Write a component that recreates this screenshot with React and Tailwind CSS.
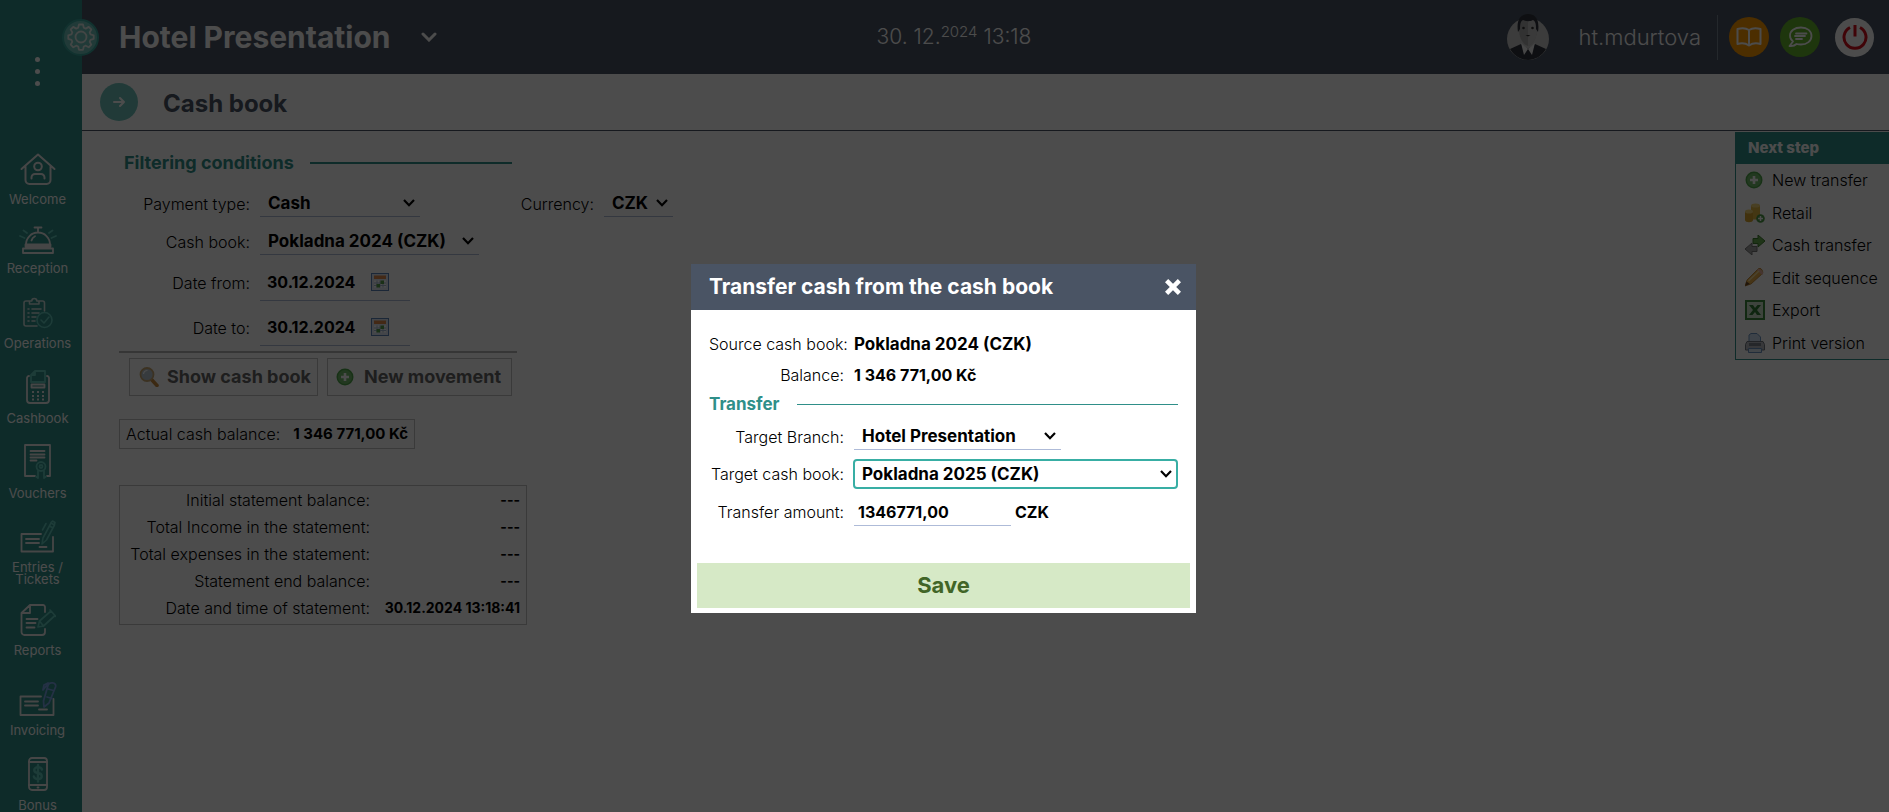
import React from "react";

const S = { fill: "none", stroke: "#ececec", strokeWidth: 2, strokeLinecap: "round", strokeLinejoin: "round" };
const G = "#62c8bc";

const WelcomeIcon = () => (
  <svg width="36" height="32" viewBox="0 0 36 32" {...S}>
    <path d="M1.5 16 18 1.5 34.500 16M5.500 13.500V27a4 4 0 0 0 4 4h17a4 4 0 0 0 4-4V13.500" />
    <circle cx="18" cy="13.500" r="3.800" />
    <path d="M11.500 25.500v-1a3.500 3.500 0 0 1 3.500-3.500h6a3.500 3.500 0 0 1 3.500 3.500v1" />
  </svg>
);
const ReceptionIcon = () => (
  <svg width="38" height="28" viewBox="0 0 38 28" {...S} strokeWidth="1.800">
    <path d="M15.500 1.500h7M19 1.500V6M7 18.500a12 12 0 0 1 24 0M12.500 14.500c.5-2 1.800-3.500 3.500-4.300" />
    <path d="M6.500 18.500h25v2h-25zM4 22.500h30V27H4z" />
    <path d="m1 10 4.500 2M4.500 4.500 8 7M37 10l-4.500 2M33.500 4.500 30 7" stroke={G} />
  </svg>
);
const OperationsIcon = () => (
  <svg width="30" height="33" viewBox="0 0 30 33" {...S} stroke="#cfe0de" strokeWidth="1.600">
    <path d="M7 5H3a2 2 0 0 0-2 2v21a2 2 0 0 0 2 2h11M15.500 5h4a2 2 0 0 1 2 2v8M6.500 8V5h2.300a2.500 2.500 0 0 1 5 0H16v3z" />
    <path d="M5 13h1M9 13h9M5 17h1M9 17h7M5 21h1M9 21h4M5 25h1M9 25h3" />
    <circle cx="21.500" cy="24" r="7.500" stroke={G} />
    <path d="m18 24 3 3 5-6" stroke={G} />
  </svg>
);
const CashbookIcon = () => (
  <svg width="24" height="34" viewBox="0 0 24 34" {...S} strokeWidth="1.800">
    <path d="M3 6a2 2 0 0 0-2 2v22a3 3 0 0 0 3 3h16a3 3 0 0 0 3-3V8a2 2 0 0 0-2-2" />
    <path d="M9 1h10v11H5V5zM9 1v4H5" stroke={G} />
    <path d="M5.500 14.500h13v3h-13z" />
    <path d="M6 22h2M11 22h2M16 22h2M6 26h2M11 26h2M16 26h2M6 29.500h2M11 29.500h2M16 29.500h2" strokeLinecap="butt" strokeWidth="2.200" />
  </svg>
);
const VouchersIcon = () => (
  <svg width="27" height="35" viewBox="0 0 27 35" {...S} strokeWidth="1.800">
    <path d="M11 32H1V1h25v31h-3M6.500 7h14M6.500 10.500h14M6.500 13.500h14M6.500 16.500h6" />
    <circle cx="17" cy="22.500" r="4.500" stroke={G} />
    <circle cx="17" cy="22.500" r="1.500" stroke={G} />
    <path d="M14 27v7l-2-1.500M20 27v7l2-1.500" stroke={G} />
  </svg>
);
const EntriesIcon = () => (
  <svg width="36" height="33" viewBox="0 0 36 33" {...S} strokeWidth="1.800">
    <path d="M21 14H1.500v17.500H33V17M6 19h13M6 23h13M19.500 27h7" />
    <path d="m22 24 1-6L31 3l3.500 2-8 15zM29.500 6l3.500 2M31 2.500l1.500-1.500 2.500 1.500-.5 2M26 3.500 22.500 10" stroke={G} strokeWidth="1.600" />
  </svg>
);
const ReportsIcon = () => (
  <svg width="36" height="32" viewBox="0 0 36 32" {...S} strokeWidth="1.800">
    <path d="M25 8V3a2 2 0 0 0-2-2H10L1.500 9v19a3 3 0 0 0 3 3H22a3 3 0 0 0 3-3v-3M10 1v8H1.500M6.500 15h11M6.500 19h9M6.500 23.500h8" />
    <path d="m18 23 1.500-6L31 7l4 4.500L23.500 22zM19.500 17l4 5M31 7l-1-1M35 11.500l1 1" stroke={G} strokeWidth="1.700" />
  </svg>
);
const InvoicingIcon = () => (
  <svg width="38" height="35" viewBox="0 0 38 35" {...S} strokeWidth="1.800">
    <path d="M22 15.500H1.500V34H34.500V18M6 20.500h13M6 24.500h13M20 28.500h8" />
    <path d="m25 26-.5-6L29 4.500c1-4 9-3.500 7.500 1.500L30 22zM29 8l5.500 1.500M28 16l5 1.500M28 4l-4 5 1-5 4-2" stroke="#7aa3e6" strokeWidth="1.800" />
  </svg>
);
const BonusIcon = () => (
  <svg width="20" height="34" viewBox="0 0 20 34" {...S} strokeWidth="1.800">
    <rect x="1" y="1" width="18" height="32" rx="3" />
    <path d="M1 5h18M1 28h18M9.500 30.500h1" />
    <path d="M14 12.500c-.5-1.500-2-2.200-4-2.200-5 0-5 5.200 0 5.700s5 6 0 6c-2.300 0-3.800-.8-4.200-2.500M10 8v16.500" stroke={G} strokeWidth="2.400" />
  </svg>
);

const NAV = [
  { label: "Welcome", Icon: WelcomeIcon, size: "h-[62px]" },
  { label: "Reception", Icon: ReceptionIcon, size: "h-[69px]" },
  { label: "Operations", Icon: OperationsIcon, size: "h-[75px]" },
  { label: "Cashbook", Icon: CashbookIcon, size: "h-[75px]" },
  { label: "Vouchers", Icon: VouchersIcon, size: "h-[75px]" },
  { label: "Entries / Tickets", Icon: EntriesIcon, size: "h-[86px]" },
  { label: "Reports", Icon: ReportsIcon, size: "h-[71px]" },
  { label: "Invoicing", Icon: InvoicingIcon, size: "h-[80px]" },
  { label: "Bonus", Icon: BonusIcon, size: "h-[75px]" },
];

const GearIcon = () => (
  <svg width="28" height="28" viewBox="0 0 28 28" fill="none" stroke="#dfe9e8" strokeWidth="1.800" strokeLinejoin="round" className="shrink-0">
    <circle cx="14" cy="14" r="5.500" />
    <path d="M12 1.500h4l.8 3.200 2 .9 2.900-1.700 2.600 2.600-1.600 2.900.8 2 3.200.9v3.600l-3.200.9-.8 2 1.600 2.900-2.600 2.600-2.900-1.600-2 .8-.8 3.400h-4l-.8-3.400-2-.8-2.900 1.600-2.600-2.600 1.600-2.900-.8-2-3.200-.9v-3.600l3.200-.9.800-2-1.600-2.900 2.600-2.600 2.900 1.700 2-.9z" />
  </svg>
);

const Avatar = () => (
  <svg width="42" height="46" viewBox="0 0 42 46" aria-label="User photo">
    <circle cx="21" cy="25" r="21" fill="#c8c8c8" />
    <path d="M3 35 14 30l7 5 7-5 11 5c-4 7-11 11-18 11S7 42 3 35z" fill="#30343c" />
    <path d="m14 29 7 6-4 6zM28 29l-7 6 4 6z" fill="#eee" />
    <path d="M12 14C12 6 15 3 21 3s9 3 9 11c0 9-3 16-9 18-6-2-9-9-9-18z" fill="#a8a8a8" />
    <path d="M21 3c6 0 9 3 9 11 0 9-3 16-9 18z" fill="#c4c4c4" />
    <path d="M11 18C9 5 14 0 21 0s12 5 10 18l-2-3c0-6-1-8-3-9-3 2-8 1-10 0-2 1-3 3-3 9z" fill="#30343c" />
    <circle cx="16.500" cy="14" r="1.300" fill="#333" />
    <circle cx="25.500" cy="14" r="1.300" fill="#333" />
    <path d="M18.500 21h5L21 22.500z" fill="#333" />
  </svg>
);

const Chevron = ({ className = "" }) => (
  <svg width="12" height="8" viewBox="0 0 12 8" fill="none" stroke="currentColor" strokeWidth="2.200" className={className} aria-hidden="true">
    <path d="m1 1 5 5.200L11 1" />
  </svg>
);

const CalendarIcon = () => (
  <svg width="18" height="18" viewBox="0 0 18 18">
    <rect x=".5" y=".5" width="17" height="17" fill="#dfe8f5" stroke="#5b82b8" />
    <rect x="3" y="2.500" width="12" height="3.500" fill="#e08a4a" />
    <path d="M3 7.500h12v7H3z" fill="#fff" />
    <path d="M3 10h12M3 12.500h12M6 7.500v7M9 7.500v7M12 7.500v7" stroke="#a9bcd6" />
    <path d="M9.500 7.500h3.500v3.500H9.500zM5.500 11H9v3.500H5.500z" fill="#58a24f" />
  </svg>
);
const PlusIcon = () => (
  <svg width="18" height="18" viewBox="0 0 18 18">
    <circle cx="9" cy="9" r="8.500" fill="#4fa64a" />
    <circle cx="9" cy="9" r="7" fill="#74bd6b" />
    <path d="M9 5v8M5 9h8" stroke="#fff" strokeWidth="2.600" />
  </svg>
);
const SearchIcon = () => (
  <svg width="20" height="20" viewBox="0 0 20 20">
    <path d="m12.500 12.500 5.500 6" stroke="#c98a3c" strokeWidth="3.500" strokeLinecap="round" />
    <circle cx="8" cy="7.500" r="6.500" fill="#b9c6d0" stroke="#c9a873" strokeWidth="1.800" />
    <path d="M4.500 7a4 4 0 0 1 4-3.500" stroke="#fff" fill="none" strokeWidth="1.200" />
  </svg>
);
const CoinsIcon = () => (
  <svg width="20" height="20" viewBox="0 0 20 20">
    <path d="M6 2.500v14h9v-14z" fill="#e5b742" />
    <ellipse cx="10.500" cy="2.500" rx="4.500" ry="2" fill="#f5d67a" />
    <path d="M0 8.500V17c0 3 8 3 8 0V8.500z" fill="#d9a52d" />
    <ellipse cx="4" cy="8.500" rx="4" ry="2" fill="#f5d67a" />
    <circle cx="15.500" cy="15.500" r="4.300" fill="#4f9c49" />
    <path d="M15.500 13v5M13 15.500h5" stroke="#fff" strokeWidth="1.500" />
  </svg>
);
const SwapIcon = () => (
  <svg width="20" height="20" viewBox="0 0 20 20">
    <path d="M8 3.500h5V0l7 6-7 6V8.500H8z" fill="#6aae52" stroke="#3f7c30" />
    <path d="M12 11.500H7V8l-7 6 7 6v-3.500h5z" fill="#a3a3a3" stroke="#777" />
  </svg>
);
const PencilIcon = () => (
  <svg width="19" height="19" viewBox="0 0 19 19">
    <path d="m0 18 2-6L13 1c1-1 3-1 4 1s1 3 0 4L6 16z" fill="#e9b04b" stroke="#b97e2c" strokeWidth=".8" />
    <path d="m12 2 5 5 1-1c1-2-3-6-5-5z" fill="#e6b1a0" />
    <path d="M3.500 13 14 3" stroke="#f8df9c" strokeWidth="1.500" />
    <path d="m0 18 1.500-4.500L5 16z" fill="#6d4a2a" />
  </svg>
);
const ExcelIcon = () => (
  <svg width="20" height="20" viewBox="0 0 20 20">
    <rect x="1" y="1" width="18" height="18" fill="#cfe3cc" stroke="#3e8a3e" strokeWidth="2" />
    <path d="M4 5h4l2 3 2.500-3H16l-4 5 4 5h-4l-2-3-2.500 3H4l4-5z" fill="#2f7d33" />
  </svg>
);
const PrinterIcon = () => (
  <svg width="20" height="20" viewBox="0 0 20 20">
    <path d="M4 9V2l2-1.500h6L15.500 4v5z" fill="#cfe2f5" stroke="#6d93c2" />
    <path d="M2 8.500h16l1.500 3V17H.5v-5.500z" fill="#b9bdc4" stroke="#70757f" />
    <path d="M4 10h12v3H4z" fill="#7c828c" />
    <path d="M3.500 15.500h13v4h-13z" fill="#dce9f6" stroke="#6d93c2" />
  </svg>
);

const STEPS = [
  ["New transfer", PlusIcon],
  ["Retail", CoinsIcon],
  ["Cash transfer", SwapIcon],
  ["Edit sequence", PencilIcon],
  ["Export", ExcelIcon],
  ["Print version", PrinterIcon],
];

const SUMMARY = [
  ["Initial statement balance:", "---"],
  ["Total Income in the statement:", "---"],
  ["Total expenses in the statement:", "---"],
  ["Statement end balance:", "---"],
  ["Date and time of statement:", "30.12.2024 13:18:41"],
];

function Select({ id, value, width, focused }) {
  return (
    <div className={`grid items-center text-[17px] ${width} ${focused ? "h-[30px] rounded border-2 border-[#38aea4]" : "h-[27px] border-b border-[#aebbd8]"}`}>
      <select id={id} defaultValue={value} className={`col-start-1 row-start-1 w-full appearance-none bg-transparent font-bold outline-none ${focused ? "pl-[7px]" : "pl-2"}`}>
        <option>{value}</option>
      </select>
      <Chevron className={`pointer-events-none col-start-1 row-start-1 justify-self-end ${focused ? "mr-1" : "mr-[5px]"}`} />
    </div>
  );
}

const Label = ({ htmlFor, children }) => (
  <label htmlFor={htmlFor} className="w-[131px] shrink-0 text-right font-light">{children}</label>
);

function DateField({ id, label }) {
  return (
    <div className="flex items-center gap-2.5">
      <Label htmlFor={id}>{label}</Label>
      <div className="flex h-[37px] w-[150px] items-center border-b border-[#aebbd8] pl-[7px]">
        <input id={id} defaultValue="30.12.2024" className="w-[104px] bg-transparent font-bold outline-none" />
        <button type="button" aria-label="Open calendar"><CalendarIcon /></button>
      </div>
    </div>
  );
}

function Sidebar() {
  return (
    <nav className="w-[82px] shrink-0 bg-[#2f8f89] pr-[7px] text-white">
      <button type="button" aria-label="More" className="mt-[57px] mb-[59px] flex w-full flex-col items-center gap-[7px]">
        <span className="size-[5px] rounded-full bg-white" />
        <span className="size-[5px] rounded-full bg-white" />
        <span className="size-[5px] rounded-full bg-white" />
      </button>
      {NAV.map(({ label, Icon, size }) => (
        <a key={label} href="#" className={`flex flex-col items-center justify-end gap-2 text-center text-[13px] leading-3 ${size}`}>
          <Icon />
          <span className="w-[68px] pb-0.5"><span className="-mx-1 block">{label}</span></span>
        </a>
      ))}
    </nav>
  );
}

function TopBar() {
  return (
    <header className="flex h-[74px] items-center bg-[#4a5464] text-white">
      <div className="flex flex-1 items-center">
        <button type="button" aria-label="Settings" className="relative -left-5 flex size-[37px] items-center justify-center rounded-full border-2 border-[#3aa79f] bg-[#6fc4bb]">
          <GearIcon />
        </button>
        <button type="button" className="flex items-center gap-[30px] text-[30px] font-bold whitespace-nowrap">
          Hotel Presentation
          <svg width="16" height="10" viewBox="0 0 16 10" fill="none" stroke="currentColor" strokeWidth="3" strokeLinecap="round"><path d="m2 2 6 6 6-6" /></svg>
        </button>
      </div>
      <time className="mr-12 text-[21px] font-light whitespace-nowrap">30. 12.<sup className="text-[15px]">2024</sup> 13:18</time>
      <div className="flex flex-1 items-center justify-end pr-[15px]">
        <Avatar />
        <span className="ml-[30px] text-[22px] font-light">ht.mdurtova</span>
        <span className="mr-[11px] ml-4 h-[45px] w-px bg-[#7b8594]" />
        <button type="button" aria-label="Manual" className="flex size-10 items-center justify-center rounded-full bg-[#ff9a00]">
          <svg width="26" height="20" viewBox="0 0 26 20" fill="none" stroke="#fff" strokeWidth="2" strokeLinejoin="round"><path d="M13 3C10 1 5 1 1.500 2v15c3.500-1 8-1 11.500 1.500C16.500 16 21 16 24.500 17V2C21 1 16 1 13 3zM13 3v15.500" /></svg>
        </button>
        <button type="button" aria-label="Messages" className="ml-[11px] flex size-10 items-center justify-center rounded-full bg-[#66b42c]">
          <svg width="25" height="22" viewBox="0 0 25 22" fill="none" stroke="#fff" strokeWidth="1.800" strokeLinecap="round" strokeLinejoin="round"><path d="M13 1.500C6.500 1.500 2 5 2 9.500c0 2.500 1 4.500 3 6L1.500 20c3 .3 5.500-.5 7-2 1.500.4 3 .5 4.500.5 6 0 10.500-3.500 10.500-8.500S19.500 1.500 13 1.500zM8 7.500h10.500M7 10h10M8 13h6" /></svg>
        </button>
        <button type="button" aria-label="Log out" className="ml-[15px] flex size-[39px] items-center justify-center rounded-full bg-white">
          <svg width="26" height="26" viewBox="0 0 26 26" fill="none" stroke="#d8101c" strokeWidth="3"><path d="M8 3.500a11 11 0 1 0 10 0M13 1v11.500" /></svg>
        </button>
      </div>
    </header>
  );
}

function FilterForm() {
  return (
    <form className="pt-5 pl-[37px]">
      <h2 className="flex h-6 w-[393px] items-center gap-4 pl-[5px] text-[18px] font-bold whitespace-nowrap text-[#2f8f89]">
        Filtering conditions
        <span className="h-0.5 flex-1 bg-[#2f8f89]" />
      </h2>
      <div className="mt-[15px] flex items-center gap-2.5">
        <Label htmlFor="ptype">Payment type:</Label>
        <Select id="ptype" value="Cash" width="w-[160px]" />
        <label htmlFor="cur" className="w-[164px] text-right font-light">Currency:</label>
        <Select id="cur" value="CZK" width="w-[69px]" />
      </div>
      <div className="mt-[11px] mb-[9px] flex items-center gap-2.5">
        <Label htmlFor="book">Cash book:</Label>
        <Select id="book" value="Pokladna 2024 (CZK)" width="w-[219px]" />
      </div>
      <DateField id="from" label="Date from:" />
      <div className="h-2" />
      <DateField id="to" label="Date to:" />
      <div className="mt-[5px] h-0.5 w-[398px] bg-[#b4b4b4]" />
      <div className="mt-[5px] flex gap-[9px] pl-2.5 text-[18px] font-bold text-[#666]">
        <button type="button" className="flex h-[38px] w-[189px] items-center gap-2 border border-[#c4c4c4] pl-[9px] whitespace-nowrap"><SearchIcon />Show cash book</button>
        <button type="button" className="flex h-[38px] w-[185px] items-center gap-2.5 border border-[#c4c4c4] pl-2 whitespace-nowrap"><PlusIcon />New movement</button>
      </div>
      <div className="mt-[23px] flex h-[30px] w-[296px] items-center justify-between border border-[#c4c4c4] px-1.5 whitespace-nowrap">
        <span className="font-light">Actual cash balance:</span>
        <b className="text-[15px]">1 346 771,00 Kč</b>
      </div>
      <table className="mt-9 w-[408px] border-separate border-spacing-0 border border-[#c4c4c4] pb-[3px] whitespace-nowrap">
        <tbody>
          {SUMMARY.map(([name, value]) => (
            <tr key={name} className="h-[27px]">
              <th scope="row" className="w-[250px] p-0 text-right font-light">{name}</th>
              <td className="p-0 pr-1.5 text-right text-[14px] font-bold">{value}</td>
            </tr>
          ))}
        </tbody>
      </table>
    </form>
  );
}

function TransferDialog() {
  return (
    <div role="dialog" aria-labelledby="dlg" className="w-[505px] bg-white">
      <header className="flex h-[46px] items-center justify-between bg-[#4a5464] pr-[15px] pl-[18px] text-white">
        <h2 id="dlg" className="text-[21px] font-bold">Transfer cash from the cash book</h2>
        <button type="button" aria-label="Close">
          <svg width="16" height="16" viewBox="0 0 16 16" stroke="#fff" strokeWidth="4.500"><path d="m1.600 1.600 12.800 12.800M14.400 1.600 1.600 14.400" /></svg>
        </button>
      </header>
      <div className="px-[18px] pt-[22px]">
        <div className="flex h-6 items-center gap-2.5">
          <span className="w-[135px] text-right font-light whitespace-nowrap">Source cash book:</span><b className="text-[17px]">Pokladna 2024 (CZK)</b>
        </div>
        <div className="mt-[7px] flex h-6 items-center gap-2.5">
          <span className="w-[135px] text-right font-light">Balance:</span><b>1 346 771,00 Kč</b>
        </div>
        <h3 className="mt-[5px] flex h-6 items-center gap-[17px] text-[17px] font-bold text-[#2f8f89]">
          Transfer<span className="h-px flex-1 bg-[#2f8f89]" />
        </h3>
        <div className="mt-[7px] flex items-center gap-2.5">
          <label htmlFor="branch" className="w-[135px] text-right font-light">Target Branch:</label>
          <Select id="branch" value="Hotel Presentation" width="w-[207px]" />
        </div>
        <div className="mt-[9px] flex items-center gap-[9px]">
          <label htmlFor="target" className="w-[135px] shrink-0 text-right font-light whitespace-nowrap">Target cash book:</label>
          <Select id="target" value="Pokladna 2025 (CZK)" width="w-[325px]" focused />
        </div>
        <div className="mt-[9px] flex items-center">
          <label htmlFor="amount" className="mr-2.5 w-[135px] text-right font-light">Transfer amount:</label>
          <input id="amount" defaultValue="1346771,00" className="mr-1 h-7 w-[157px] border-b border-[#aebbd8] pl-1 font-bold outline-none" />
          <b>CZK</b>
        </div>
      </div>
      <div className="px-1.5 pt-[37px] pb-[5px]">
        <button type="button" className="h-[45px] w-full bg-[#d6e9c6] pb-0.5 text-[22px] font-bold text-[#416527]">Save</button>
      </div>
    </div>
  );
}

export default function App() {
  return (
    <div className="h-screen overflow-hidden bg-white font-['Inter','Liberation_Sans',sans-serif] text-base leading-6 text-black">
      <div className="flex h-full">
        <Sidebar />
        <div className="min-w-0 flex-1">
          <TopBar />
          <div className="flex h-[57px] items-center border-b border-[#4a5464] pl-[18px]">
            <button type="button" aria-label="Go" className="flex size-[38px] items-center justify-center rounded-full bg-[#6fc4bb]">
              <svg width="12" height="12" viewBox="0 0 12 12" fill="none" stroke="#fff" strokeWidth="2" strokeLinecap="round" strokeLinejoin="round"><path d="M1 6h10M7 2l4 4-4 4" /></svg>
            </button>
            <h1 className="ml-[25px] pt-1 text-[24px] font-bold text-[#4a5464]">Cash book</h1>
          </div>
          <main className="flex items-start justify-between">
            <FilterForm />
            <aside className="mt-px w-[154px] border-b border-l border-[#2f8f89]">
              <h2 className="flex h-8 items-center bg-[#2f8f89] pl-3 text-[15px] font-extrabold text-white">Next step</h2>
              <ul className="grid h-[195px] grid-rows-6">
                {STEPS.map(([name, Icon]) => (
                  <li key={name}>
                    <a href="#" className="flex h-full items-center pl-[9px] font-light whitespace-nowrap"><span className="w-[27px]"><Icon /></span>{name}</a>
                  </li>
                ))}
              </ul>
            </aside>
          </main>
        </div>
      </div>
      <div className="fixed inset-0 flex items-start justify-center bg-black/70 pt-[264px] pr-0.5">
        <TransferDialog />
      </div>
    </div>
  );
}
